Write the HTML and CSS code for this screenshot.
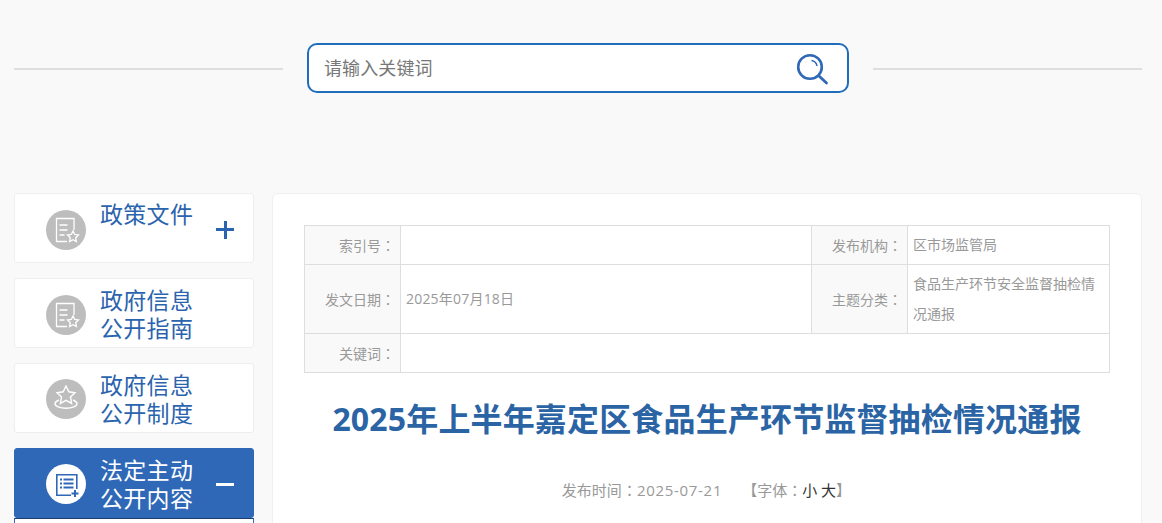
FILE: index.html
```html
<!DOCTYPE html>
<html lang="zh-CN">
<head>
<meta charset="utf-8">
<title>2025年上半年嘉定区食品生产环节监督抽检情况通报</title>
<link rel="stylesheet" href="styles.css">
</head>
<body>
<div class="page">
  <header class="search-row">
    <div class="rule"></div>
    <form class="search-box">
      <input class="search-input" type="text" placeholder="请输入关键词">
      <svg class="search-icon" viewBox="0 0 34 34" width="34" height="34" fill="none" stroke="#2f68b7">
        <circle cx="15" cy="16" r="11.800" stroke-width="2.600"/>
        <path d="M16.500 9.500c3 .5 5 2.500 5.500 5.500" stroke-width="1.500"/>
        <path d="M24 25l7.500 7" stroke-width="2.800" stroke-linecap="round"/>
      </svg>
    </form>
    <div class="rule"></div>
  </header>

  <div class="columns">
    <nav class="sidebar">
      <a class="nav-item nav-first">
        <span class="nav-icon">
          <svg viewBox="0 0 40 40" width="40" height="40" fill="none" stroke="#fff" stroke-width="1.300">
            <path d="M21 31.500H10.500V8.500H28V20"/>
            <path d="M13.500 15h8M13.500 20h8M13.500 25h5" stroke-width="1.400"/>
            <path d="M27 21l1.700 3.500 3.800.5-2.800 2.700.7 3.800-3.400-1.800-3.400 1.800.7-3.800-2.800-2.700 3.800-.5z"/>
          </svg>
        </span>
        <span class="nav-text">政策文件</span>
        <span class="nav-sign plus"></span>
      </a>
      <a class="nav-item">
        <span class="nav-icon">
          <svg viewBox="0 0 40 40" width="40" height="40" fill="none" stroke="#fff" stroke-width="1.300">
            <path d="M21 31.500H10.500V8.500H28V20"/>
            <path d="M13.500 15h8M13.500 20h8M13.500 25h5" stroke-width="1.400"/>
            <path d="M27 21l1.700 3.500 3.800.5-2.800 2.700.7 3.800-3.400-1.800-3.400 1.800.7-3.800-2.800-2.700 3.800-.5z"/>
          </svg>
        </span>
        <span class="nav-text">政府信息<br>公开指南</span>
      </a>
      <a class="nav-item nav-third">
        <span class="nav-icon">
          <svg viewBox="0 0 40 40" width="40" height="40" fill="none" stroke="#fff" stroke-width="1.400">
            <path d="M20 7l2.800 5.800 6.200.9-4.500 4.400 1.100 6.300-5.600-3-5.600 3 1.100-6.300-4.500-4.400 6.200-.9z"/>
            <path d="M13 21c-2.500 1-4 2.300-4 3.700 0 2.500 4.900 4.500 11 4.500s11-2 11-4.500c0-1.400-1.500-2.700-4-3.700"/>
          </svg>
        </span>
        <span class="nav-text">政府信息<br>公开制度</span>
      </a>
      <a class="nav-item nav-active">
        <span class="nav-icon">
          <svg viewBox="0 0 40 40" width="40" height="40" fill="none" stroke="#2f68b7" stroke-width="1.600">
            <path d="M25 31.200H10.800V10.800h20V25"/>
            <path d="M14 15.500h2M17.500 15.500h10M14 19.500h2M17.500 19.500h10M14 23.500h2M17.500 23.500h10" stroke-width="2"/>
            <path d="M29 26v7M25.500 29.500h7" stroke-width="2"/>
          </svg>
        </span>
        <span class="nav-text">法定主动<br>公开内容</span>
        <span class="nav-sign minus"></span>
      </a>
      <div class="submenu"></div>
    </nav>

    <main class="card">
      <table class="meta-table">
        <colgroup>
          <col class="col-label"><col class="col-value"><col class="col-label"><col class="col-last">
        </colgroup>
        <tbody>
          <tr class="row-top">
            <th>索引号<span class="colon" lang="zh-TW">：</span></th>
            <td></td>
            <th>发布机构<span class="colon" lang="zh-TW">：</span></th>
            <td>区市场监管局</td>
          </tr>
          <tr class="row-mid">
            <th>发文日期<span class="colon" lang="zh-TW">：</span></th>
            <td class="cell-date">2025年07月18日</td>
            <th>主题分类<span class="colon" lang="zh-TW">：</span></th>
            <td>食品生产环节安全监督抽检情况通报</td>
          </tr>
          <tr class="row-end">
            <th>关键词<span class="colon" lang="zh-TW">：</span></th>
            <td colspan="3"></td>
          </tr>
        </tbody>
      </table>
      <h1 class="title">2025年上半年嘉定区食品生产环节监督抽检情况通报</h1>
      <p class="info">
        <span>发布时间<span class="colon" lang="zh-TW">：</span><span class="date">2025-07-21</span></span>
        <span class="font-size">【字体<span class="colon" lang="zh-TW">：</span><span class="size-link">小 大</span>】</span>
      </p>
    </main>
  </div>
</div>
</body>
</html>
```

FILE: styles.css
```css
* {
  box-sizing: border-box;
}

html,
body {
  margin: 0;
  height: 523px;
  overflow: hidden;
}

body {
  background: #f9f9f9;
  font-family: "Open Sans", "Noto Sans CJK SC", sans-serif;
  color: #999;
}

.page {
  padding: 43px 20px 0 14px;
}

.search-row {
  display: flex;
  align-items: center;
  gap: 24px;
  margin-bottom: 100px;
}

.rule {
  flex: 1;
  height: 2px;
  background: #dedede;
  margin-top: 2px;
}

.search-box {
  width: 542px;
  height: 50px;
  display: flex;
  align-items: center;
  padding: 0 18px 0 15px;
  background: #fff;
  border: 2px solid #1f6dbb;
  border-radius: 10px;
}

.search-input {
  flex: 1;
  min-width: 0;
  border: 0;
  outline: 0;
  background: transparent;
  padding: 0 0 2px;
  letter-spacing: 0.1px;
  font: 18px "Noto Sans CJK SC", sans-serif;
}

.search-input::placeholder {
  color: #777;
  opacity: 1;
}

.search-icon {
  display: block;
}

.columns {
  display: grid;
  grid-template-columns: 240px 870px;
  gap: 18px;
  align-items: start;
}

.sidebar {
  display: flex;
  flex-direction: column;
}

.nav-item {
  position: relative;
  display: flex;
  height: 70px;
  margin-bottom: 15px;
  padding: 7px 0 0 31px;
  background: #fff;
  border: 1px solid #eee;
  border-radius: 3px;
  color: #2b64ae;
}

.nav-first {
  padding-top: 6px;
}

.nav-active {
  margin-bottom: 0;
  background: #2f68b7;
  border-color: #2f68b7;
  color: #fff;
}

.nav-icon {
  flex: none;
  width: 40px;
  height: 40px;
  margin-top: 9px;
  margin-right: 14px;
  border-radius: 50%;
  background: #bdbdbd;
}

.nav-first .nav-icon {
  margin-top: 10px;
}

.nav-third .nav-icon,
.nav-active .nav-icon {
  margin-top: 8px;
}

.nav-active .nav-icon {
  background: #fff;
}

.nav-icon svg {
  display: block;
}

.nav-text {
  font-size: 23px;
  line-height: 28px;
  letter-spacing: 0.3px;
}

.nav-sign {
  position: absolute;
  left: 201px;
  width: 18px;
  height: 3px;
  background: #2b64ae;
}

.plus {
  top: 34px;
}

.plus::after {
  content: "";
  position: absolute;
  left: 7.500px;
  top: -7.500px;
  width: 3px;
  height: 18px;
  background: #2b64ae;
}

.minus {
  top: 34px;
  background: #fff;
}

.submenu {
  height: 60px;
  background: #fff;
  border: 1px solid #2f68b7;
  border-top-color: #1d3f70;
  border-bottom: 0;
}

.card {
  height: 400px;
  padding: 31px 31px 0;
  background: #fff;
  border: 1px solid #f0f0f0;
  border-radius: 6px;
}

.meta-table {
  width: 805px;
  table-layout: fixed;
  border-collapse: collapse;
  border: 1px solid #dedede;
  font-size: 14px;
  line-height: 30px;
}

.col-label {
  width: 96px;
}

.col-value {
  width: 411px;
}

.col-last {
  width: 202px;
}

.meta-table th,
.meta-table td {
  border: 1px solid #dedede;
  padding: 1px 5px;
  font-weight: 400;
}

.meta-table th {
  background: #f9f9f9;
  text-align: right;
}

.meta-table td {
  text-align: left;
}

.row-top {
  height: 39px;
}

.row-mid {
  height: 69px;
}

.row-end {
  height: 39px;
}

.cell-date {
  letter-spacing: 0.2px;
}

.colon {
  font-family: "Noto Sans CJK TC", sans-serif;
}

.title {
  margin: 25px 0 0;
  font-size: 32px;
  line-height: 42px;
  font-weight: 700;
  letter-spacing: 0.16px;
  text-align: center;
  color: #2b64a4;
}

.info {
  display: flex;
  justify-content: center;
  gap: 20px;
  margin: 38px 0 0;
  padding-right: 1px;
  font-size: 15px;
  line-height: 24px;
}

.date {
  letter-spacing: 0.7px;
}

.size-link {
  color: #333;
}
```
